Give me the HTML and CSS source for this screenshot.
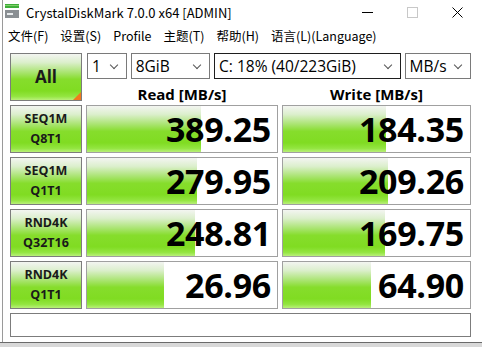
FILE: index.html
```html
<!DOCTYPE html>
<html lang="zh-CN">
<head>
    <meta charset="UTF-8">
    <title>CrystalDiskMark 7.0.0 x64 [ADMIN]</title>
    <link rel="stylesheet" href="styles.css">
</head>
<body>
    <div class="window">
        <div class="titlebar">
            <svg class="app-icon" width="14" height="14" viewBox="0 0 14 14">
                <rect x="0" y="0" width="14" height="4" fill="#3fae3a"/>
                <rect x="0" y="1" width="14" height="1" fill="#7fd06a"/>
                <rect x="0" y="6" width="14" height="8" fill="#8a8f93"/>
                <rect x="2" y="9" width="6" height="2" fill="#e9ecee"/>
            </svg>
            <span class="title">CrystalDiskMark 7.0.0 x64 [ADMIN]</span>
            <div class="controls">
                <span class="ctl"><svg width="11" height="11" viewBox="0 0 11 11"><line x1="0" y1="5.5" x2="11" y2="5.5" stroke="#000" stroke-width="1"/></svg></span>
                <span class="ctl"><svg width="11" height="11" viewBox="0 0 11 11"><rect x="0.5" y="0.5" width="10" height="10" fill="none" stroke="#c8c8c8" stroke-width="1"/></svg></span>
                <span class="ctl"><svg width="11" height="11" viewBox="0 0 11 11"><path d="M0.5 0.5 L10.5 10.5 M10.5 0.5 L0.5 10.5" stroke="#000" stroke-width="1"/></svg></span>
            </div>
        </div>

        <div class="menubar">
            <span>文件(F)</span>
            <span>设置(S)</span>
            <span>Profile</span>
            <span>主题(T)</span>
            <span>帮助(H)</span>
            <span>语言(L)(Language)</span>
        </div>

        <div class="panel">
            <div class="bench">
                <div class="cell-btn all">All<span class="corner"></span></div>
                <div class="head">
                    <div class="combos">
                        <div class="combo c-count">1<span class="chev"></span></div>
                        <div class="combo c-size">8GiB<span class="chev"></span></div>
                        <div class="combo c-drive">C: 18% (40/223GiB)<span class="chev"></span></div>
                        <div class="combo c-unit">MB/s<span class="chev"></span></div>
                    </div>
                    <div class="cols">
                        <div>Read [MB/s]</div>
                        <div>Write [MB/s]</div>
                    </div>
                </div>

                <div class="cell-btn">SEQ1M<br>Q8T1</div>
                <div class="value"><span class="bar" style="width: 114px"></span><span class="num">389.25</span></div>
                <div class="value"><span class="bar" style="width: 103px"></span><span class="num">184.35</span></div>

                <div class="cell-btn">SEQ1M<br>Q1T1</div>
                <div class="value"><span class="bar" style="width: 110px"></span><span class="num">279.95</span></div>
                <div class="value"><span class="bar" style="width: 105px"></span><span class="num">209.26</span></div>

                <div class="cell-btn">RND4K<br>Q32T16</div>
                <div class="value"><span class="bar" style="width: 108px"></span><span class="num">248.81</span></div>
                <div class="value"><span class="bar" style="width: 102px"></span><span class="num">169.75</span></div>

                <div class="cell-btn">RND4K<br>Q1T1</div>
                <div class="value"><span class="bar" style="width: 77px"></span><span class="num">26.96</span></div>
                <div class="value"><span class="bar" style="width: 88px"></span><span class="num">64.90</span></div>

                <div class="comment"></div>
            </div>
        </div>
    </div>
    <div class="desktop"></div>
</body>
</html>
```

FILE: styles.css
```css
body {
    margin: 0;
    width: 482px;
    height: 347px;
    overflow: hidden;
    background: #ffffff;
    font-family: "Open Sans", "Noto Sans CJK SC", sans-serif;
    color: #000;
}

.window {
    height: 342px;
    background: #ffffff;
    border-left: 1px solid #9a9a9a;
    margin-left: 2px;
    box-sizing: border-box;
}

/* title bar */
.titlebar {
    height: 24px;
    display: flex;
    align-items: center;
    padding-left: 2px;
}

.app-icon {
    margin-top: -2px;
}

.title {
    margin-left: 7px;
    font-size: 13px;
    font-family: "Noto Sans CJK SC", sans-serif;
    color: #000;
}

.controls {
    margin-left: auto;
    margin-right: 2px;
    display: flex;
}

.ctl {
    width: 45px;
    height: 24px;
    display: flex;
    align-items: center;
    justify-content: center;
}

/* menu */
.menubar {
    height: 22px;
    display: flex;
    align-items: center;
    padding-left: 5px;
    gap: 12px;
    font-family: "Noto Sans CJK SC", sans-serif;
    font-size: 12.5px;
}

/* main panel */
.panel {
    padding: 7px 0 0 7px;
}

.bench {
    display: grid;
    grid-template-columns: 72px 192px 189px;
    grid-template-rows: 48px 48px 48px 48px 48px 24px;
    column-gap: 4px;
    row-gap: 4px;
}

.cell-btn {
    position: relative;
    border: 1px solid #7c7c7c;
    box-sizing: border-box;
    background: linear-gradient(to bottom, #f3f5f1 0%, #dcefcd 18%, #a9e470 40%, #86dd2c 55%, #80dc22 80%, #93e540 92%, #b9f07a 100%);
    display: flex;
    align-items: center;
    justify-content: center;
    text-align: center;
    font-weight: bold;
    font-size: 12.5px;
    line-height: 20px;
    color: #1a1a1a;
}

.all {
    font-size: 17px;
}

.corner {
    position: absolute;
    right: 0;
    bottom: 0;
    width: 0;
    height: 0;
    border-left: 8px solid transparent;
    border-bottom: 8px solid #f07a1e;
}

.head {
    grid-column: 2 / 4;
    display: flex;
    flex-direction: column;
}

.combos {
    display: flex;
    gap: 4px;
    height: 26px;
    margin-left: 1px;
}

.combo {
    position: relative;
    border: 1px solid #7a7a7a;
    box-sizing: border-box;
    background: #fff;
    font-size: 15.5px;
    line-height: 24px;
    padding-left: 4px;
}

.c-count { width: 40px; }
.c-size { width: 80px; }
.c-drive { width: 188px; border-color: #1e1e1e; }
.c-unit { width: 67px; }

.chev {
    position: absolute;
    right: 9px;
    top: 8px;
    width: 5px;
    height: 5px;
    border-right: 1px solid #555;
    border-bottom: 1px solid #555;
    transform: rotate(45deg);
}

.cols {
    display: grid;
    grid-template-columns: 192px 189px;
    column-gap: 4px;
    font-weight: bold;
    font-size: 15px;
    text-align: center;
    margin-top: 5px;
}

.value {
    position: relative;
    border: 1px solid #a0a0a0;
    box-sizing: border-box;
    background: #fff;
    display: flex;
    align-items: center;
    justify-content: flex-end;
}

.bar {
    position: absolute;
    left: 0;
    top: 0;
    bottom: 0;
    background: linear-gradient(to bottom, #f3f5f1 0%, #dcefcd 18%, #a9e470 40%, #86dd2c 55%, #80dc22 80%, #93e540 92%, #b9f07a 100%);
}

.num {
    position: relative;
    font-weight: bold;
    font-size: 34px;
    line-height: 1;
    padding-right: 6px;
    letter-spacing: -0.3px;
}

.comment {
    grid-column: 1 / 4;
    border: 1px solid #7c7c7c;
    box-sizing: border-box;
    background: #fff;
}

.desktop {
    height: 5px;
    border-top: 1px solid #6a6a6a;
    background: #d8d8d8;
}
```
